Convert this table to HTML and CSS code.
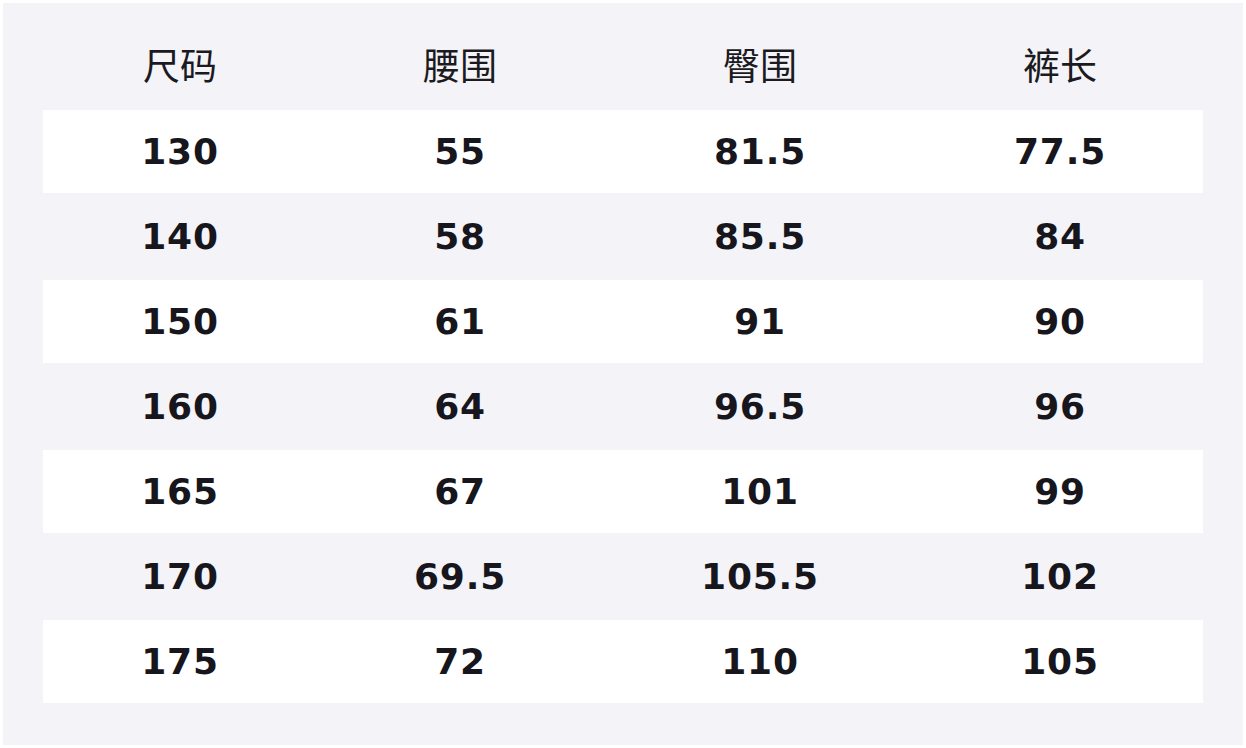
FILE: index.html
```html
<!DOCTYPE html>
<html lang="zh">
<head>
<meta charset="utf-8">
<link rel="stylesheet" href="styles.css">
</head>
<body>
<div class="panel">
  <div class="row head">
    <div>尺码</div><div>腰围</div><div>臀围</div><div>裤长</div>
  </div>
  <div class="row odd"><div>130</div><div>55</div><div>81.5</div><div>77.5</div></div>
  <div class="row even"><div>140</div><div>58</div><div>85.5</div><div>84</div></div>
  <div class="row odd"><div>150</div><div>61</div><div>91</div><div>90</div></div>
  <div class="row even"><div>160</div><div>64</div><div>96.5</div><div>96</div></div>
  <div class="row odd"><div>165</div><div>67</div><div>101</div><div>99</div></div>
  <div class="row even"><div>170</div><div>69.5</div><div>105.5</div><div>102</div></div>
  <div class="row odd"><div>175</div><div>72</div><div>110</div><div>105</div></div>
</div>
</body>
</html>
```

FILE: styles.css
```css
html, body {
  margin: 0;
  background: #ffffff;
}
body {
  padding: 3px;
}
.panel {
  width: 1240px;
  height: 742px;
  box-sizing: border-box;
  background: #f3f3f8;
  padding: 40px 40px 42px;
}
.row {
  display: grid;
  grid-template-columns: 274px 286px 314px 286px;
  align-items: center;
  text-align: center;
  color: #16161c;
}
.head {
  height: 67px;
  padding-bottom: 24px;
  box-sizing: border-box;
  font-family: "Noto Sans CJK SC", "Noto Sans", sans-serif;
  font-size: 37px;
  line-height: 43px;
  color: #1a1a20;
}
.odd, .even {
  font-family: "DejaVu Sans", "Noto Sans", sans-serif;
  font-weight: bold;
  font-size: 36px;
  letter-spacing: 0.8px;
}
.odd {
  height: 83px;
  background: #ffffff;
}
.even {
  height: 87px;
}
```
